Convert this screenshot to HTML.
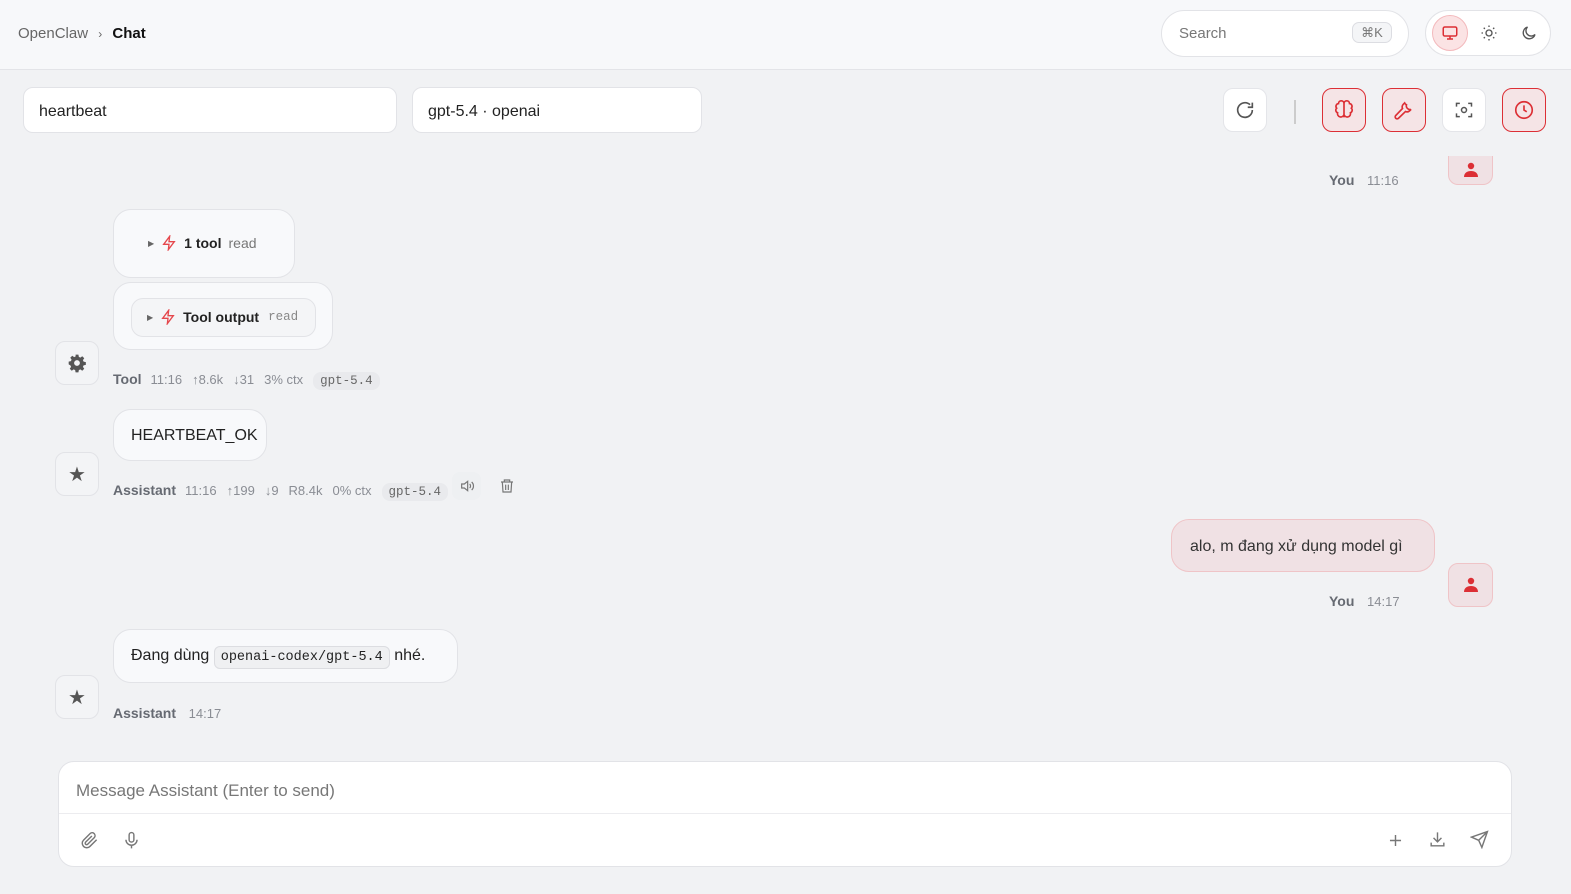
<!DOCTYPE html>
<html><head><meta charset="utf-8">
<style>
*{box-sizing:border-box;margin:0;padding:0}
body{width:1571px;height:894px;overflow:hidden;background:#f1f2f4;font-family:"Liberation Sans",sans-serif;color:#222;position:relative}
.a{position:absolute}
.hdr{left:0;top:0;width:1571px;height:70px;background:#f7f8fa;border-bottom:1px solid #e3e4e8}
.box{background:#fff;border:1px solid #e2e3e7}
.ib{width:44px;height:44px;border-radius:10px;display:flex;align-items:center;justify-content:center}
.red{background:#f5e4e6;border:1.5px solid #dc2f35}
.wh{background:#fff;border:1px solid #e4e5e9}
.bub{background:#f8f9fb;border:1px solid #e2e3e7;border-radius:18px}
.av{width:44px;height:44px;border-radius:10px;background:#f3f4f6;border:1px solid #e2e3e7;display:flex;align-items:center;justify-content:center}
.meta{font-size:13px;color:#8a8d94;white-space:nowrap}
.meta b{color:#666a72;font-size:14px;margin-right:9px}
.meta span{margin-right:10px}
.tag{font-family:"Liberation Mono",monospace;background:#e9eaed;border-radius:8px;padding:2px 7px;color:#666;font-size:12.5px}
svg{display:block}
</style></head><body>
<div class="a hdr"></div>
<div class="a" style="left:18px;top:25px;font-size:15px;color:#666">OpenClaw <span style="margin:0 6px;font-size:12px">›</span> <b style="color:#111">Chat</b></div>
<div class="a box" style="left:1161px;top:10px;width:248px;height:47px;border-radius:24px"></div>
<div class="a" style="left:1179px;top:25px;font-size:15px;color:#777">Search</div>
<div class="a" style="left:1352px;top:22px;width:40px;height:21px;border:1px solid #dcdde2;border-radius:7px;background:#f4f5f7;font-size:13px;color:#777;text-align:center;line-height:19px">⌘K</div>
<div class="a box" style="left:1425px;top:10px;width:126px;height:46px;border-radius:23px"></div>
<div class="a" style="left:1432px;top:15px;width:36px;height:36px;border-radius:18px;background:#fbe3e4;border:1px solid #f3b9bc;display:flex;align-items:center;justify-content:center"><svg width="18" height="18" viewBox="0 0 24 24" fill="none" stroke="#dc2f35" stroke-width="2"><rect x="3" y="4" width="18" height="12" rx="2"/><path d="M8 20h8M12 16v4"/></svg></div>
<div class="a" style="left:1480px;top:24px"><svg width="18" height="18" viewBox="0 0 24 24" fill="none" stroke="#555" stroke-width="1.8"><circle cx="12" cy="12" r="4"/><path d="M12 2v2M12 20v2M2 12h2M20 12h2M5 5l1.5 1.5M17.5 17.5L19 19M5 19l1.5-1.5M17.5 6.5L19 5"/></svg></div>
<div class="a" style="left:1520px;top:24px"><svg width="18" height="18" viewBox="0 0 24 24" fill="none" stroke="#555" stroke-width="1.8"><path d="M20 14A8 8 0 1 1 10 4a6 6 0 0 0 10 10z"/></svg></div>

<div class="a box" style="left:23px;top:87px;width:374px;height:46px;border-radius:10px;padding:15px 15px;font-size:16px">heartbeat</div>
<div class="a box" style="left:412px;top:87px;width:290px;height:46px;border-radius:10px;padding:15px 15px;font-size:16px">gpt-5.4 · openai</div>

<div class="a ib wh" style="left:1223px;top:88px"><svg width="22" height="22" viewBox="0 0 24 24" fill="none" stroke="#555" stroke-width="1.8"><path d="M20 12a8 8 0 1 1-2.5-5.8M20 4v5h-5"/></svg></div>
<div class="a" style="left:1294px;top:100px;width:2px;height:24px;background:#ccc"></div>
<div class="a ib red" style="left:1322px;top:88px"><svg width="22" height="22" viewBox="0 0 24 24" fill="none" stroke="#dc2f35" stroke-width="1.8"><path d="M12 5a3 3 0 0 0-6 0 3 3 0 0 0-2 5 3 3 0 0 0 1 5 3 3 0 0 0 7 2zM12 5a3 3 0 0 1 6 0 3 3 0 0 1 2 5 3 3 0 0 1-1 5 3 3 0 0 1-7 2zM12 5v15"/></svg></div>
<div class="a ib red" style="left:1382px;top:88px"><svg width="22" height="22" viewBox="0 0 24 24" fill="none" stroke="#dc2f35" stroke-width="1.8"><path d="M14.7 6.3a4 4 0 0 0 5 5l-1.5 1.5a4 4 0 0 1-4.5.8L6 21a2 2 0 0 1-3-3l7.4-7.7a4 4 0 0 1 .8-4.5L12.7 4.3a4 4 0 0 0 2 2z"/></svg></div>
<div class="a ib wh" style="left:1442px;top:88px"><svg width="20" height="20" viewBox="0 0 24 24" fill="none" stroke="#555" stroke-width="1.8"><path d="M3 8V4h4M17 4h4v4M21 16v4h-4M7 20H3v-4"/><circle cx="12" cy="12" r="3"/></svg></div>
<div class="a ib red" style="left:1502px;top:88px"><svg width="22" height="22" viewBox="0 0 24 24" fill="none" stroke="#dc2f35" stroke-width="1.8"><circle cx="12" cy="12" r="9"/><path d="M12 7v5l3 2"/></svg></div>

<div class="a" style="left:1448px;top:156px;width:45px;height:29px;background:#f0e1e4;border:1px solid #efc4c7;border-top:none;border-radius:0 0 10px 10px;display:flex;justify-content:center;align-items:center"><svg width="16" height="16" viewBox="0 0 16 16" fill="#dc2f35"><circle cx="8" cy="4" r="3.2"/><path d="M1 15c0-4 3-6 7-6s7 2 7 6z"/></svg></div>
<div class="a meta" style="left:1329px;top:172px"><b>You</b> 11:16</div>

<div class="a bub" style="left:113px;top:209px;width:182px;height:69px"></div>
<div class="a" style="left:148px;top:235px;font-size:14px;display:flex;align-items:center;gap:7px"><span style="font-size:8px;color:#666">▶</span><svg width="16" height="16" viewBox="0 0 24 24" fill="none" stroke="#e5484d" stroke-width="2"><path d="M13 2L4 14h8l-1 8 9-12h-8z"/></svg><b style="font-weight:600;color:#222">1 tool</b><span style="color:#777">read</span></div>
<div class="a bub" style="left:113px;top:282px;width:220px;height:68px"></div>
<div class="a" style="left:131px;top:298px;width:185px;height:39px;border:1px solid #e2e3e7;border-radius:12px;background:#f4f5f7"></div>
<div class="a" style="left:147px;top:309px;font-size:14px;display:flex;align-items:center;gap:7px"><span style="font-size:8px;color:#666">▶</span><svg width="16" height="16" viewBox="0 0 24 24" fill="none" stroke="#e5484d" stroke-width="2"><path d="M13 2L4 14h8l-1 8 9-12h-8z"/></svg><b style="font-weight:600;color:#222">Tool output</b><span style="color:#888;font-family:'Liberation Mono',monospace;font-size:12.5px;margin-left:2px">read</span></div>
<div class="a av" style="left:55px;top:341px"><svg width="20" height="20" viewBox="0 0 24 24" fill="#555"><path d="M10.3 2h3.4l.5 2.7 1.8.8 2.3-1.6 2.4 2.4-1.6 2.3.8 1.8 2.7.5v3.4l-2.7.5-.8 1.8 1.6 2.3-2.4 2.4-2.3-1.6-1.8.8-.5 2.7h-3.4l-.5-2.7-1.8-.8-2.3 1.6-2.4-2.4 1.6-2.3-.8-1.8L2 13.7v-3.4l2.7-.5.8-1.8-1.6-2.3 2.4-2.4 2.3 1.6 1.8-.8zM12 8.5a3.5 3.5 0 1 0 0 7 3.5 3.5 0 0 0 0-7z"/></svg></div>
<div class="a meta" style="left:113px;top:371px"><b>Tool</b><span>11:16</span><span>↑8.6k</span><span>↓31</span><span>3% ctx</span><span class="tag">gpt-5.4</span></div>

<div class="a bub" style="left:113px;top:409px;width:154px;height:52px;padding:17px 17px;font-size:16px">HEARTBEAT_OK</div>
<div class="a av" style="left:55px;top:452px;font-size:20px;color:#555">★</div>
<div class="a meta" style="left:113px;top:482px"><b>Assistant</b><span>11:16</span><span>↑199</span><span>↓9</span><span>R8.4k</span><span>0% ctx</span><span class="tag">gpt-5.4</span></div>
<div class="a" style="left:452px;top:472px;width:29px;height:28px;border-radius:8px;background:#eef0f2;display:flex;align-items:center;justify-content:center"><svg width="16" height="16" viewBox="0 0 24 24" fill="none" stroke="#777" stroke-width="1.8"><path d="M4 9h4l5-4v14l-5-4H4zM16 9a4 4 0 0 1 0 6M19 6a8 8 0 0 1 0 12"/></svg></div>
<div class="a" style="left:499px;top:478px"><svg width="16" height="16" viewBox="0 0 24 24" fill="none" stroke="#777" stroke-width="1.8"><path d="M3 6h18M8 6V3h8v3M5 6l1 15h12l1-15M10 10v8M14 10v8"/></svg></div>

<div class="a" style="left:1171px;top:519px;width:264px;height:53px;background:#f0e1e4;border:1px solid #efc4c7;border-radius:18px;padding:18px 18px;font-size:16px;color:#333;white-space:nowrap">alo, m đang xử dụng model gì</div>
<div class="a" style="left:1448px;top:563px;width:45px;height:44px;background:#f0e1e4;border:1px solid #efc4c7;border-radius:10px;display:flex;justify-content:center;align-items:center"><svg width="16" height="16" viewBox="0 0 16 16" fill="#dc2f35"><circle cx="8" cy="4" r="3.2"/><path d="M1 15c0-4 3-6 7-6s7 2 7 6z"/></svg></div>
<div class="a meta" style="left:1329px;top:593px"><b>You</b> 14:17</div>

<div class="a bub" style="left:113px;top:629px;width:345px;height:54px;padding:17px 17px;font-size:16px;white-space:nowrap">Đang dùng <span style="font-family:'Liberation Mono',monospace;font-size:13.5px;background:#eff0f2;border:1px solid #dcdde1;border-radius:6px;padding:3px 6px">openai-codex/gpt-5.4</span> nhé.</div>
<div class="a av" style="left:55px;top:675px;font-size:20px;color:#555">★</div>
<div class="a meta" style="left:113px;top:705px"><b>Assistant</b> 14:17</div>

<div class="a" style="left:58px;top:761px;width:1454px;height:106px;background:#fff;border:1px solid #e2e3e7;border-radius:16px"></div>
<div class="a" style="left:59px;top:813px;width:1452px;height:1px;background:#ececef"></div>
<div class="a" style="left:76px;top:781px;font-size:17px;color:#777">Message Assistant (Enter to send)</div>
<div class="a" style="left:80px;top:831px"><svg width="19" height="19" viewBox="0 0 24 24" fill="none" stroke="#777" stroke-width="1.8"><path d="M21 11l-8.5 8.5a5.5 5.5 0 0 1-8-8L13 3a3.7 3.7 0 0 1 5.2 5.2l-8.5 8.5a1.8 1.8 0 0 1-2.6-2.6L15 6.3"/></svg></div>
<div class="a" style="left:122px;top:831px"><svg width="19" height="19" viewBox="0 0 24 24" fill="none" stroke="#777" stroke-width="1.8"><rect x="9" y="2" width="6" height="12" rx="3"/><path d="M5 11a7 7 0 0 0 14 0M12 18v4"/></svg></div>
<div class="a" style="left:1386px;top:831px"><svg width="19" height="19" viewBox="0 0 24 24" fill="none" stroke="#777" stroke-width="1.8"><path d="M12 5v14M5 12h14"/></svg></div>
<div class="a" style="left:1428px;top:830px"><svg width="19" height="19" viewBox="0 0 24 24" fill="none" stroke="#777" stroke-width="1.8"><path d="M12 3v12M7 10l5 5 5-5M4 16v4h16v-4"/></svg></div>
<div class="a" style="left:1470px;top:830px"><svg width="19" height="19" viewBox="0 0 24 24" fill="none" stroke="#777" stroke-width="1.8"><path d="M22 2L11 13M22 2l-7 20-4-9-9-4z"/></svg></div>
</body></html>
